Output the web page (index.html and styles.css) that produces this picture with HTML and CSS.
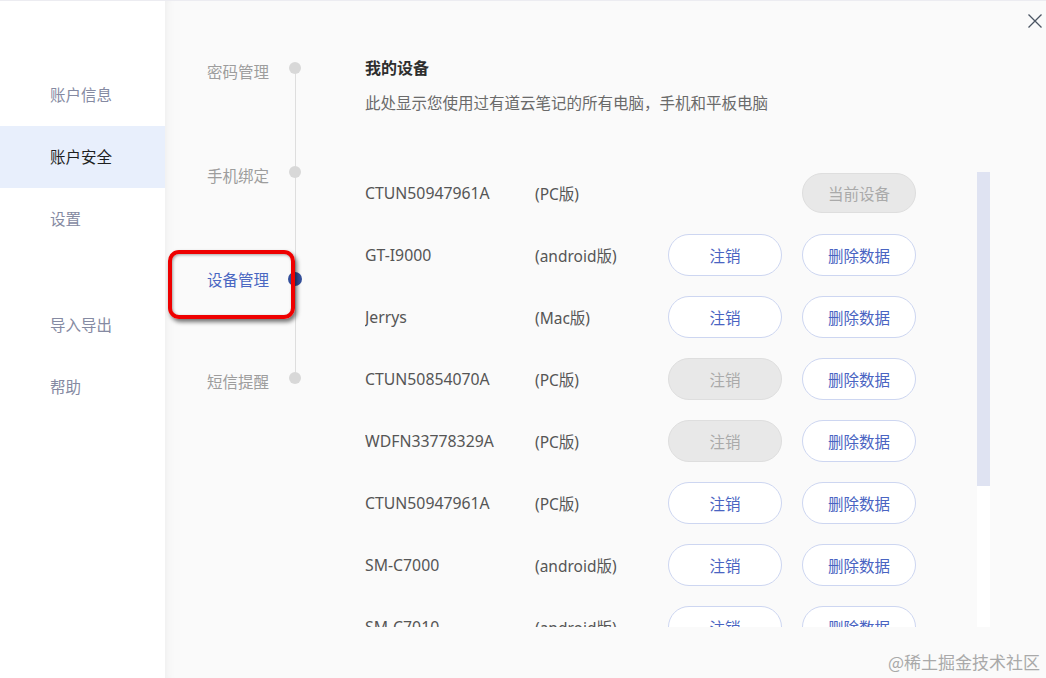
FILE: index.html
```html
<!DOCTYPE html>
<html lang="zh-CN">
<head>
<meta charset="utf-8">
<title>账户安全</title>
<link rel="stylesheet" href="styles.css">
</head>
<body>
<div class="app">
  <aside class="sidebar">
    <ul class="side-menu">
      <li class="side-item">账户信息</li>
      <li class="side-item active">账户安全</li>
      <li class="side-item">设置</li>
      <li class="side-item gap">导入导出</li>
      <li class="side-item">帮助</li>
    </ul>
  </aside>
  <main class="main">
    <button class="close" aria-label="关闭">
      <svg width="16" height="16" viewBox="0 0 16 16"><path d="M1.5 1.5 L14.5 14.5 M14.5 1.5 L1.5 14.5" stroke="#4b5563" stroke-width="1.3" fill="none"/></svg>
    </button>
    <nav class="steps">
      <div class="step"><span class="step-text">密码管理</span><span class="dot"></span></div>
      <div class="step"><span class="step-text">手机绑定</span><span class="dot"></span></div>
      <div class="step active"><span class="step-text">设备管理</span><span class="dot"></span></div>
      <div class="step last"><span class="step-text">短信提醒</span><span class="dot"></span></div>
    </nav>
    <section class="content">
      <h1 class="title">我的设备</h1>
      <p class="desc">此处显示您使用过有道云笔记的所有电脑，手机和平板电脑</p>
      <div class="list-wrap">
        <div class="device-list">
          <div class="row"><span class="name">CTUN50947961A</span><span class="type">(PC版)</span><span class="cell"></span><span class="btn off">当前设备</span></div>
          <div class="row"><span class="name">GT-I9000</span><span class="type">(android版)</span><span class="btn">注销</span><span class="btn">删除数据</span></div>
          <div class="row"><span class="name">Jerrys</span><span class="type">(Mac版)</span><span class="btn">注销</span><span class="btn">删除数据</span></div>
          <div class="row"><span class="name">CTUN50854070A</span><span class="type">(PC版)</span><span class="btn off">注销</span><span class="btn">删除数据</span></div>
          <div class="row"><span class="name">WDFN33778329A</span><span class="type">(PC版)</span><span class="btn off">注销</span><span class="btn">删除数据</span></div>
          <div class="row"><span class="name">CTUN50947961A</span><span class="type">(PC版)</span><span class="btn">注销</span><span class="btn">删除数据</span></div>
          <div class="row"><span class="name">SM-C7000</span><span class="type">(android版)</span><span class="btn">注销</span><span class="btn">删除数据</span></div>
          <div class="row"><span class="name">SM-C7010</span><span class="type">(android版)</span><span class="btn">注销</span><span class="btn">删除数据</span></div>
        </div>
        <div class="scrollbar"><div class="thumb"></div></div>
      </div>
    </section>
    <div class="mark"></div>
    <div class="watermark">@稀土掘金技术社区</div>
  </main>
</div>
</body>
</html>
```
FILE: styles.css
```css
* { box-sizing: border-box; }
html, body { margin: 0; padding: 0; }
body {
  width: 1046px;
  height: 678px;
  overflow: hidden;
  font-family: "Noto Sans", "Noto Sans CJK SC", sans-serif;
  font-size: 15.5px;
  color: #555;
  background: #fafafa;
}
.app {
  display: flex;
  height: 678px;
  border-top: 1px solid #ececf1;
}
.sidebar {
  width: 165px;
  flex: none;
  background: #fff;
}
.side-menu {
  list-style: none;
  margin: 0;
  padding: 63px 0 0;
}
.side-item {
  height: 62px;
  line-height: 62px;
  padding-left: 50px;
  color: #858aa2;
}
.side-item.active {
  background: #e8effc;
  color: #1f1f1f;
}
.side-item.gap { margin-top: 44px; }
.main {
  flex: 1;
  position: relative;
  display: flex;
  align-items: flex-start;
  background: #fafafa;
  box-shadow: inset 10px 0 10px -8px rgba(0,0,0,0.05);
}
.close {
  position: absolute;
  right: 2px;
  top: 11px;
  width: 18px;
  height: 18px;
  padding: 1px;
  border: 0;
  background: none;
  cursor: pointer;
}
.steps {
  position: relative;
  margin: 58px 0 0 42px;
  width: 96px;
  display: flex;
  flex-direction: column;
  gap: 79px;
}
.steps::before {
  content: "";
  position: absolute;
  left: 88px;
  top: 9px;
  bottom: 12px;
  width: 1px;
  background: #dedede;
}
.step {
  position: relative;
  height: 25px;
  display: flex;
  align-items: center;
  justify-content: space-between;
  color: #9d9d9d;
}
.step.last { margin-top: -2px; }
.dot {
  width: 12px;
  height: 12px;
  border-radius: 50%;
  background: #d8d8d8;
  margin-right: 2px;
  margin-top: -7px;
}
.step.active { color: #4a67c2; }
.step.active .dot {
  width: 14px;
  height: 14px;
  margin-right: 1px;
  margin-top: -2px;
  background: #34509c;
}
.content {
  margin-left: 62px;
  padding-top: 54px;
  width: 625px;
}
.title {
  margin: 0;
  font-size: 16px;
  font-weight: 700;
  line-height: 26px;
  color: #2e2e2e;
}
.desc {
  margin: 10px 0 0;
  line-height: 24px;
  color: #6a6a6a;
}
.list-wrap {
  margin-top: 57px;
  height: 455px;
  display: flex;
}
.device-list {
  flex: 1;
  height: 455px;
  overflow: hidden;
  display: flex;
  flex-direction: column;
  gap: 20px;
}
.scrollbar {
  width: 13px;
  flex: none;
  background: #fff;
}
.thumb {
  height: 314px;
  background: #dfe3f2;
}
.row {
  flex: none;
  height: 42px;
  display: flex;
  align-items: center;
}
.name { width: 170px; color: #555; font-size: 15.8px; }
.type { width: 133px; color: #555; }
.cell { width: 114px; margin-right: 20px; }
.btn {
  width: 114px;
  height: 42px;
  margin-right: 20px;
  border: 1px solid #cdd6f1;
  border-radius: 21px;
  background: #fff;
  color: #4a64c2;
  display: flex;
  align-items: center;
  justify-content: center;
}
.btn.off {
  background: #e8e8e8;
  border-color: #dedede;
  color: #aaa;
}
.row:first-child .btn.off { height: 40px; }
.mark {
  position: absolute;
  left: 3px;
  top: 249px;
  width: 127px;
  height: 69px;
  border: 4px solid #ee0000;
  border-radius: 11px;
  box-shadow: 2px 3px 4px rgba(0,0,0,0.55), inset 1px 1px 3px rgba(0,0,0,0.35);
}
.watermark {
  position: absolute;
  right: 6px;
  bottom: 4px;
  font-family: "Noto Sans CJK SC", sans-serif;
  font-size: 17px;
  color: #a9a9a9;
}
```
